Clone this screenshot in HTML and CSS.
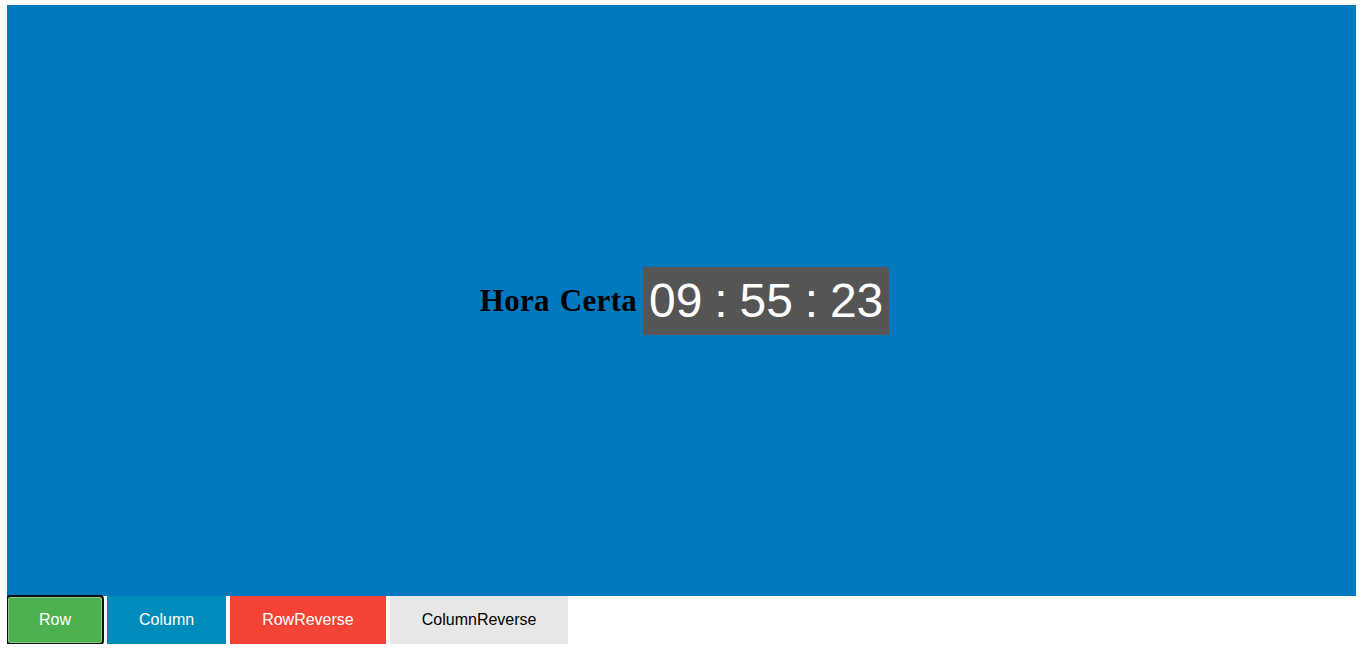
FILE: index.html
```html
<!DOCTYPE html>
<html lang="pt">
<head>
<meta charset="utf-8">
<title>Hora Certa</title>
<link rel="stylesheet" href="styles.css">
</head>
<body>
<div class="stage">
  <span class="label">Hora Certa</span>
  <span class="clock">09 : 55 : 23</span>
</div>
<div class="buttons">
  <button class="btn btn-green focused">Row</button>
  <button class="btn btn-blue">Column</button>
  <button class="btn btn-red">RowReverse</button>
  <button class="btn btn-gray">ColumnReverse</button>
</div>
</body>
</html>
```
FILE: styles.css
```css
html, body {
  background: #ffffff;
}
body {
  margin: 5px 6px 0 7px;
}
.stage {
  height: 591px;
  background: #0079bf;
  display: flex;
  flex-direction: row;
  align-items: center;
  justify-content: center;
  gap: 6px;
  padding-left: 6px;
}
.label {
  font-family: "Liberation Serif", "Times New Roman", serif;
  font-weight: bold;
  font-size: 31px;
  letter-spacing: 0.3px;
  word-spacing: 2px;
  color: #000000;
}
.clock {
  font-family: "Liberation Sans", Arial, sans-serif;
  font-size: 48px;
  line-height: 56px;
  color: #ffffff;
  background: #555555;
  padding: 6px 6px 6px 6px;
  word-spacing: -1.5px;
}
.buttons {
  display: flex;
  gap: 4px;
}
.btn {
  font-family: "Liberation Sans", Arial, sans-serif;
  font-size: 16px;
  line-height: 18px;
  padding: 15px 32px;
  border: none;
  margin: 0;
  color: #ffffff;
  position: relative;
}
.btn-green { background: #4caf50; }
.btn-blue { background: #008cba; }
.btn-red { background: #f44336; }
.btn-gray { background: #e7e7e7; color: #000000; }
.focused::after {
  content: "";
  position: absolute;
  top: -1px;
  left: -1px;
  right: -1px;
  bottom: -1px;
  border: 2px solid #101010;
  border-radius: 4px;
  box-shadow: inset 0 0 0 1px rgba(255,255,255,0.35);
}
```
